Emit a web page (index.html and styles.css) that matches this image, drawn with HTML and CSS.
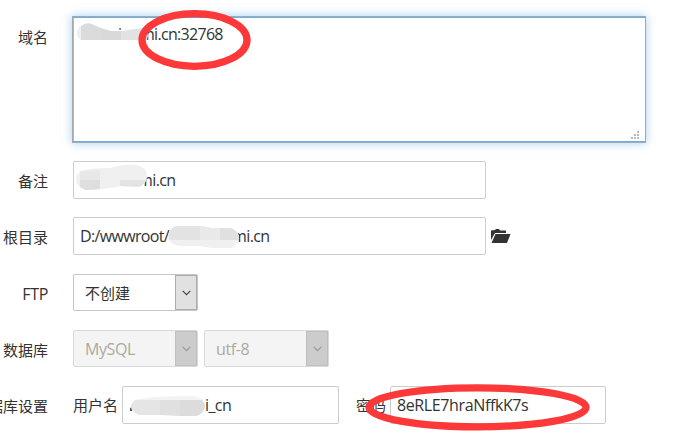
FILE: index.html
```html
<!DOCTYPE html>
<html lang="zh-CN">
<head>
<meta charset="utf-8">
<title>添加网站</title>
<link rel="stylesheet" href="styles.css">
</head>
<body>
<form class="form">
  <div class="row row-domain">
    <div class="label">域名</div>
    <div class="area">
      <span class="value domain-value"><span class="lead-i">i</span>mi.cn:32768</span>
      <svg class="smudge smudge-domain" width="70" height="20" viewBox="0 0 70 20"><path fill="#e7f0f7" d="M4 3Q0 6 0 10Q0 15 4 17Z"/><path fill="#dbdbdb" d="M4 3Q10-2 17 2L24 5V17H4Z"/><path fill="#d9d9d9" d="M24 5L34 8L44 8V17H24Z"/><path fill="#e2e2e2" d="M44 8L58 6L69 5L71 12L70 17H44Z"/></svg>
      <svg class="grip" width="8" height="8" viewBox="0 0 8 8"><path fill="#bbb" d="M6 0h2v2H6zM3 3h2v2H3zM6 3h2v2H6zM0 6h2v2H0zM3 6h2v2H3zM6 6h2v2H6z"/></svg>
    </div>
  </div>
  <div class="row">
    <div class="label">备注</div>
    <div class="input wide">
      <span class="value note-value">mi.cn</span>
      <svg class="smudge smudge-note" width="72" height="26" viewBox="0 0 72 26"><path fill="#f0f0f0" d="M5 6Q14 3 34 3Q46-1 60 0Q71 2 71 11Q71 20 62 22L46 21Q25 25 10 25Q0 22 0 14Q1 8 5 6Z"/><path fill="#e7e7e7" d="M4 6L24 5V24L10 25L4 22Z"/><path fill="#dedede" d="M4 15H24V24L10 25L4 22Z"/><path fill="#e3e3e3" d="M44 15H70Q67 21 62 22L44 21Z"/></svg>
    </div>
  </div>
  <div class="row row-path">
    <div class="label">根目录</div>
    <div class="input wide">
      <span class="value path-value">D:/wwwroot/</span>
      <span class="value path-tail">mi.cn</span>
      <svg class="smudge smudge-path" width="72" height="23" viewBox="0 0 72 23"><path fill="#f0f0f0" d="M8 0H35L44 2H62Q71 4 71 12Q70 21 62 22H43L32 20H12Q0 18 0 10Q1 2 8 0Z"/><path fill="#e3e3e3" d="M8 0H32V14H1Q-1 4 8 0Z"/><path fill="#e9e9e9" d="M32 0L44 2H52V14H32Z"/><path fill="#e0e0e0" d="M52 2H62Q71 4 71 14H52Z"/></svg>
    </div>
    <svg class="folder" width="20" height="15" viewBox="0 0 20 15"><path fill="#333" d="M0 11V1.5L4 1L5 0H8L9 1.5H15V4H4Z"/><path fill="#333" d="M4.5 5H19.5L16 14H0.5Z"/></svg>
  </div>
  <div class="row">
    <div class="label ftp-label">FTP</div>
    <div class="select"><span class="cjk">不创建</span><i class="drop"><svg width="9" height="6" viewBox="0 0 9 6"><path d="M.7 .8L4.5 4.6L8.3 .8"/></svg></i></div>
  </div>
  <div class="row">
    <div class="label">数据库</div>
    <div class="select disabled"><span>MySQL</span><i class="drop"><svg width="9" height="6" viewBox="0 0 9 6"><path d="M.7 .8L4.5 4.6L8.3 .8"/></svg></i></div>
    <div class="select disabled second"><span>utf-8</span><i class="drop"><svg width="9" height="6" viewBox="0 0 9 6"><path d="M.7 .8L4.5 4.6L8.3 .8"/></svg></i></div>
  </div>
  <div class="row">
    <div class="label">数据库设置</div>
    <div class="caption">用户名</div>
    <div class="input user">
      <span class="value user-value">i_cn</span>
      <svg class="smudge smudge-user" width="76" height="20" viewBox="0 0 76 20"><path fill="#555" d="M0 12l2-1v4H0z"/><path fill="#f3f3f3" d="M5 4Q20 0 64 0Q74 2 75 8V10H1Q2 5 5 4Z"/><path fill="#e5e5e5" d="M5 4H30V19H9Q0 16 1 9Z"/><path fill="#e0e0e0" d="M30 4H50V20L30 19Z"/><path fill="#dcdcdc" d="M50 4H72Q75 8 75 10Q74 18 66 20H50Z"/></svg>
    </div>
    <div class="caption password-caption">密码</div>
    <div class="input password"><span class="value password-value">8eRLE7hraNffkK7s</span></div>
  </div>
</form>
<svg class="marks" width="683" height="439" viewBox="0 0 683 439"><ellipse cx="194.5" cy="40" rx="52.5" ry="26.3"/><ellipse cx="477.5" cy="407.3" rx="108.5" ry="19.5"/></svg>
</body>
</html>
```
FILE: styles.css
```css
* { box-sizing: border-box; }
body {
  margin: 0;
  width: 683px;
  height: 439px;
  overflow: hidden;
  position: relative;
  background: #fff;
  color: #333;
  font: 15px/20px "Open Sans", "Noto Sans CJK SC", sans-serif;
}
.form {
  display: flex;
  flex-direction: column;
  gap: 18px;
  padding-top: 16px;
}
.row { display: flex; height: 38px; }
.row-domain { height: 127px; }
.row-path { margin-bottom: 1px; }
.label {
  flex: none;
  display: flex;
  justify-content: flex-end;
  width: 48px;
  margin-right: 25px;
  padding-top: 10px;
  white-space: nowrap;
}
.row-domain .label { padding-top: 11px; }
.ftp-label { font-size: 16px; letter-spacing: -.3px; }
.area {
  position: relative;
  width: 574px;
  height: 127px;
  margin-left: -1px;
  border: 1px solid #a5a8ac;
  background: #fff;
  box-shadow: inset 0 1px #66afe9, inset 0 -1px #66afe9, inset 1px 0 #8fc2ea, 0 0 9px rgba(102, 175, 233, .6);
}
.input {
  position: relative;
  height: 38px;
  border: 1px solid #ccc;
  border-radius: 2px;
  background: #fff;
}
.wide { width: 413px; }
.value { position: absolute; top: 8px; white-space: pre; font-size: 16px; letter-spacing: -.45px; }
.domain-value { left: 67px; top: 7px; letter-spacing: -.7px; }
.lead-i { position: absolute; left: -22px; }
.note-value { left: 64px; letter-spacing: -.6px; }
.path-value { left: 6px; letter-spacing: -.65px; }
.path-tail { left: 158px; letter-spacing: -.6px; }
.user-value { left: 82px; letter-spacing: -.6px; }
.password-value { left: 6px; letter-spacing: -.38px; }
.smudge { position: absolute; overflow: visible; }
.smudge-domain { left: 4px; top: 6px; }
.smudge-note { left: 2px; top: 3px; }
.smudge-path { left: 94px; top: 8px; }
.smudge-user { left: 7px; top: 9px; }
.grip { position: absolute; right: 6px; bottom: 3px; }
.folder { margin: 12px 0 0 5px; }
.select {
  display: flex;
  justify-content: space-between;
  width: 125px;
  height: 37px;
  padding-left: 11px;
  border: 1px solid #c5c5c5;
  border-radius: 2px;
  font-size: 16px;
  letter-spacing: -.4px;
  line-height: 36px;
}
.cjk { font-size: 15px; letter-spacing: 0; }
.drop {
  display: flex;
  align-items: center;
  justify-content: center;
  width: 22px;
  margin: 0;
  border: 1px solid #adadad;
  background: #e1e1e1;
}
.drop path { fill: none; stroke: #444; stroke-width: 1.2; }
.disabled { border-color: #d9d9d9; background: #f4f4f4; color: #acaa9b; }
.disabled .drop { background: #ccc; border-color: #bfbfbf; }
.disabled .drop path { stroke: #999; }
.second { margin-left: 6px; }
.caption { width: 49px; padding-top: 9px; white-space: nowrap; }
.user { width: 217px; }
.password-caption { width: 34px; margin-left: 17px; }
.password { width: 216px; }
.marks { position: absolute; left: 0; top: 0; pointer-events: none; }
.marks ellipse { fill: none; stroke: #fc3838; stroke-width: 7.3; }
```
